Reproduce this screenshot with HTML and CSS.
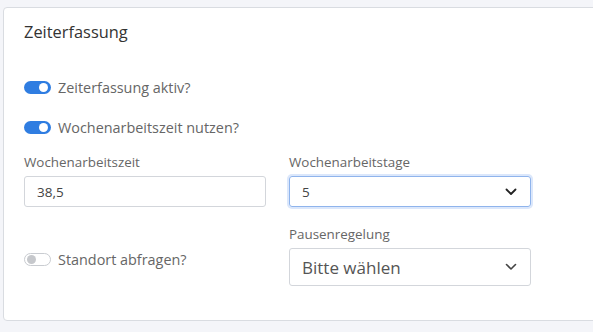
FILE: index.html
```html
<!DOCTYPE html>
<html lang="de">
<head>
<meta charset="utf-8">
<link rel="stylesheet" href="styles.css">
</head>
<body>
<div class="card">
  <h2 class="title">Zeiterfassung</h2>
  <div class="switch-row first">
    <span class="switch on"><span class="knob"></span></span>
    <span class="switch-label">Zeiterfassung aktiv?</span>
  </div>
  <div class="switch-row">
    <span class="switch on"><span class="knob"></span></span>
    <span class="switch-label">Wochenarbeitszeit nutzen?</span>
  </div>
  <div class="grid">
    <div class="field">
      <label class="label">Wochenarbeitszeit</label>
      <div class="input">38,5</div>
    </div>
    <div class="field">
      <label class="label">Wochenarbeitstage</label>
      <div class="input select focus">
        <span>5</span>
        <svg class="chev" width="12" height="8" viewBox="0 0 12 8"><path d="M1.5 1.5 L6 6 L10.5 1.5" fill="none" stroke="#222" stroke-width="1.8" stroke-linecap="round" stroke-linejoin="round"/></svg>
      </div>
    </div>
    <div class="field switch-cell">
      <div class="switch-row">
        <span class="switch off"><span class="knob"></span></span>
        <span class="switch-label">Standort abfragen?</span>
      </div>
    </div>
    <div class="field">
      <label class="label">Pausenregelung</label>
      <div class="input select big">
        <span>Bitte wählen</span>
        <svg class="chev" width="12" height="8" viewBox="0 0 12 8"><path d="M1.5 1.5 L6 6 L10.5 1.5" fill="none" stroke="#444" stroke-width="1.6" stroke-linecap="round" stroke-linejoin="round"/></svg>
      </div>
    </div>
  </div>
</div>
</body>
</html>
```
FILE: styles.css
```css
* { box-sizing: border-box; }
html, body { overflow: hidden; }
body {
  margin: 0;
  background: #f4f5f9;
  font-family: "Open Sans", "Noto Sans", sans-serif;
  color: #666;
}
.card {
  margin: 7px 0 0 3px;
  width: 640px;
  height: 314px;
  background: #fff;
  border: 1px solid #d9dce1;
  border-radius: 4px;
  padding: 0 0 0 20px;
}
.title {
  margin: 0;
  padding-top: 14px;
  font-size: 16.4px;
  font-weight: 400;
  color: #333;
  line-height: 20px;
}
.switch-row {
  display: flex;
  align-items: center;
  gap: 7px;
  height: 20px;
  margin-top: 20px;
}
.switch-row.first { margin-top: 35px; }
.switch {
  position: relative;
  width: 27px;
  height: 13px;
  border-radius: 7px;
  flex: none;
}
.switch.on { background: #2f7de1; }
.switch.off { background: #fff; border: 1px solid #c9ccd1; }
.knob {
  position: absolute;
  top: 2px;
  width: 9px;
  height: 9px;
  border-radius: 50%;
}
.switch.on .knob { right: 3px; background: #fff; }
.switch.off .knob { left: 2px; top: 1px; background: #c6c8cc; }
.switch-label {
  font-size: 14.4px;
  color: #666;
}
.grid {
  display: grid;
  grid-template-columns: 242px 242px;
  column-gap: 23px;
  row-gap: 18px;
  margin-top: 16px;
}
.label {
  display: block;
  font-size: 13.4px;
  color: #666;
  line-height: 18px;
  margin-bottom: 5px;
}
.input {
  height: 31px;
  border: 1px solid #d3d6db;
  border-radius: 3px;
  padding: 0 12px;
  display: flex;
  align-items: center;
  font-size: 13.5px;
  color: #444;
}
.select { justify-content: space-between; padding-right: 13px; }
.focus {
  border-color: #8fb4ec;
  box-shadow: 0 0 0 2px #dbe7fb;
}
.big {
  height: 38px;
  font-size: 17px;
  color: #555;
}
.switch-cell { display: flex; align-items: center; padding-top: 8px; }
.switch-cell .switch-row { margin-top: 0; }
```
